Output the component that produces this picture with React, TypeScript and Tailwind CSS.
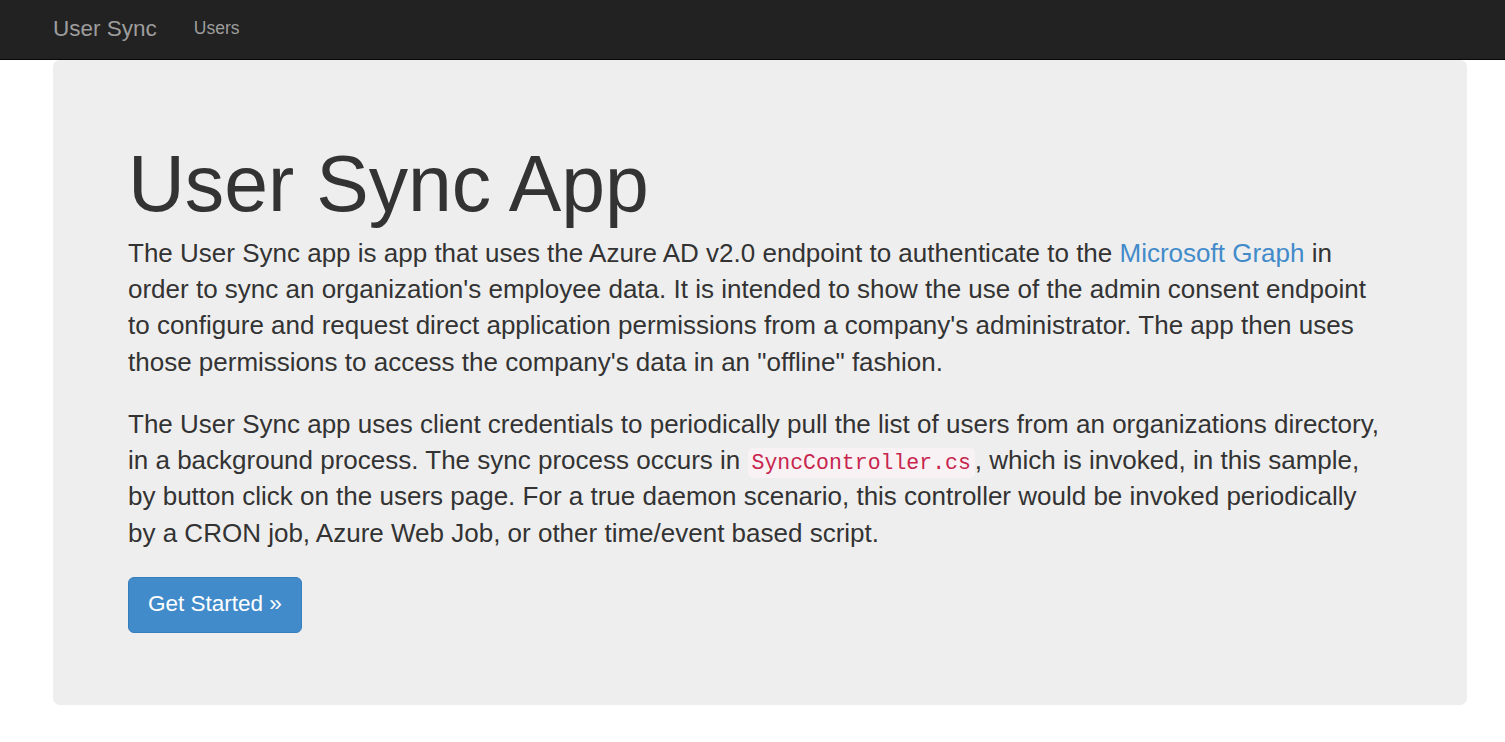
import React from 'react';

const App: React.FC = () => {
  return (
    <div className="min-h-screen bg-white text-[#333] font-['Liberation_Sans',Arial,sans-serif]">
      {/* Top navbar */}
      <nav className="h-[60px] bg-[#222] border-b border-[#080808]">
        <div className="flex items-center h-full pl-[53px]">
          <a href="#" className="text-[22.5px] text-[#9d9d9d] leading-none -mt-[1px]">
            User Sync
          </a>
          <a href="#" className="ml-[37px] text-[17.5px] text-[#9d9d9d] leading-none -mt-[1px]">
            Users
          </a>
        </div>
      </nav>

      {/* Jumbotron */}
      <div className="ml-[53px] w-[1414px] bg-[#eee] rounded-[7px] pl-[75px] pr-[81px] pt-[81px] pb-[72px]">
        <h1 className="text-[78.75px] leading-[1.1] text-[#333] mb-[7px]">User Sync App</h1>
        <p className="text-[26px] leading-[36.3px] mb-[26px]">
          The User Sync app is app that uses the Azure AD v2.0 endpoint to authenticate to the{' '}
          <a href="#" className="text-[#428bca]">Microsoft Graph</a> in order to sync an organization's
          employee data. It is intended to show the use of the admin consent endpoint to configure and
          request direct application permissions from a company's administrator. The app then uses those
          permissions to access the company's data in an "offline" fashion.
        </p>
        <p className="text-[26px] leading-[36.3px] mb-[26px]">
          The User Sync app uses client credentials to periodically pull the list of users from an
          organizations directory, in a background process. The sync process occurs in{' '}
          <code className="font-['Liberation_Mono',monospace] text-[21.5px] leading-none text-[#c7254e] bg-[#f9f2f4] rounded-[5px] px-[4px] py-[3px]">
            SyncController.cs
          </code>
          , which is invoked, in this sample, by button click on the users page. For a true daemon
          scenario, this controller would be invoked periodically by a CRON job, Azure Web Job, or other
          time/event based script.
        </p>
        <p>
          <a
            href="#"
            className="inline-block h-[56px] px-[19px] pt-[15px] text-[22.5px] leading-none text-white bg-[#428bca] border border-[#357ebd] rounded-[6px]"
          >
            Get Started »
          </a>
        </p>
      </div>
    </div>
  );
};

export default App;
